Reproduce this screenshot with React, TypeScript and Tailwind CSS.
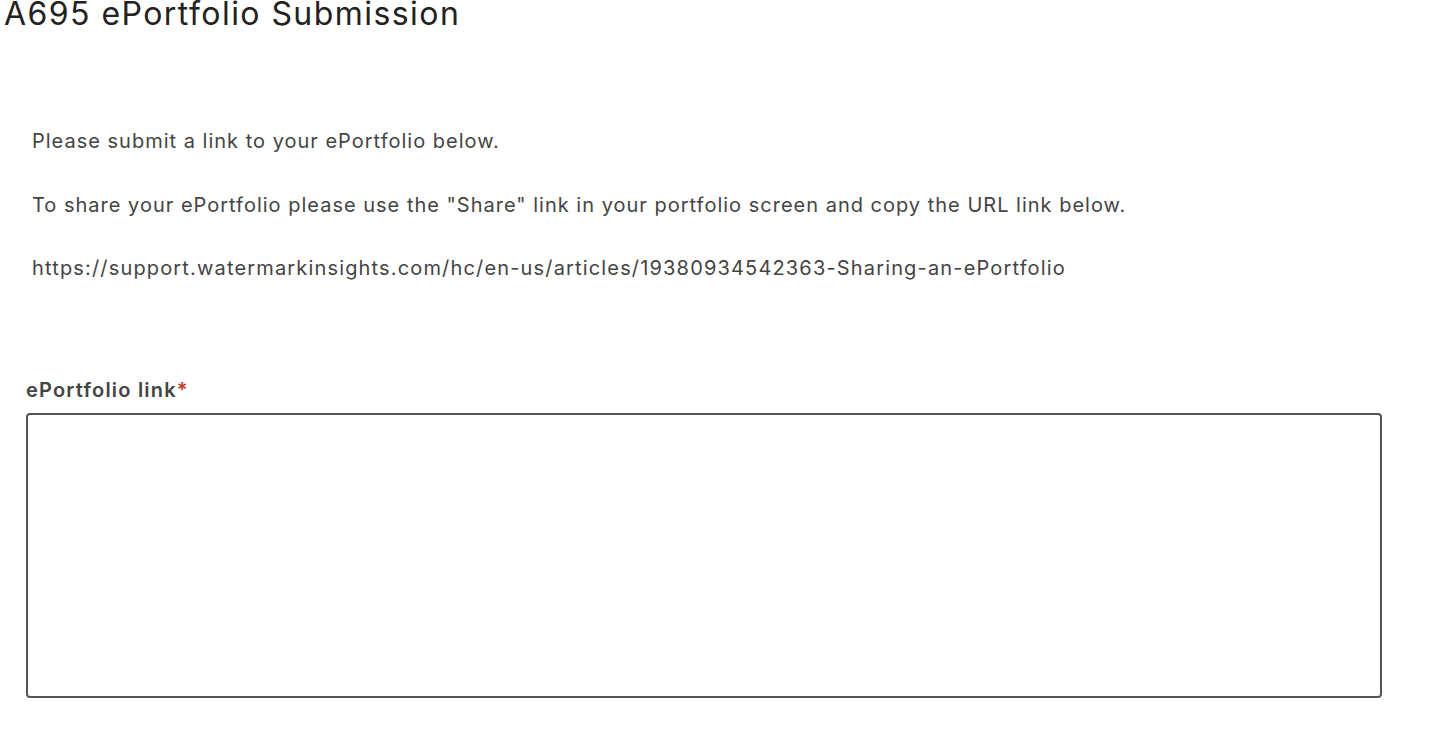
export default function App() {
  return (
    <div className="min-h-screen bg-white text-[#222]" style={{ fontFamily: 'Inter, "Noto Sans", sans-serif' }}>
      <h1 className="pl-[4px] pt-[1px] text-[32px] leading-[26px] font-normal tracking-[0.045em] text-[#222]">A695 ePortfolio Submission</h1>

      <div className="pl-[32px] pt-[102px] text-[20px] leading-[24px] tracking-[0.05em] text-[#444] flex flex-col gap-[39.5px]">
        <p>Please submit a link to your ePortfolio below.</p>
        <p>To share your ePortfolio please use the "Share" link in your portfolio screen and copy the URL link below.</p>
        <p className="tracking-[0.058em]">https://support.watermarkinsights.com/hc/en-us/articles/19380934542363-Sharing-an-ePortfolio</p>
      </div>

      <div className="pl-[26px] pr-[48px] pt-[98px]">
        <label className="block text-[20px] leading-[24px] font-semibold tracking-[0.06em] text-[#444] mb-[11px]">
          ePortfolio link<span className="text-[#c4391d]">*</span>
        </label>
        <textarea className="block w-[1356px] h-[285px] border-2 border-[#555] rounded-[4px] resize-none outline-none" />
      </div>
    </div>
  );
}
